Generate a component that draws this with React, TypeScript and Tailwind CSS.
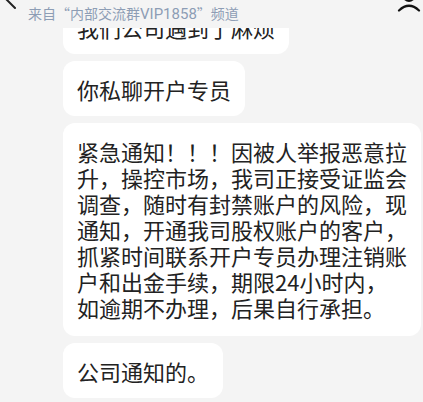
import React from "react";

const Bubble = ({ children, extra = "" }: { children: React.ReactNode; extra?: string }) => (
  <div
    className={`w-fit rounded-[12px] bg-white px-[14px] text-[22px] leading-[26px] text-[#222222] whitespace-nowrap ${extra}`}
  >
    {children}
  </div>
);

export default function App() {
  return (
    <div className="relative w-[423px] h-[402px] overflow-hidden bg-[#f4f4f4] font-['Noto_Sans_CJK_SC','Noto_Sans',sans-serif]">
      {/* header overlay */}
      <div className="absolute left-0 right-0 top-0 z-10 h-[28px] bg-[#f4f4f4]">
        <svg className="absolute left-0 top-0" width="24" height="14" viewBox="0 0 24 14">
          <path d="M4 -3 L15 8" stroke="#222" strokeWidth="2" strokeLinecap="round" fill="none" />
        </svg>
        <div className="absolute left-[28px] top-[3px] text-[14px] leading-[20px] text-[#8d9db5] whitespace-nowrap">
          来自“内部交流群<span className="font-['Roboto',sans-serif] text-[15px]">VIP1858</span>”频道
        </div>
        <svg className="absolute left-[394px] top-0" width="29" height="14" viewBox="394 0 29 14">
          <circle cx="409" cy="-4" r="5" stroke="#111" strokeWidth="2.2" fill="none" />
          <path d="M399 10.5 Q409 1 419 10.5" stroke="#111" strokeWidth="2.2" strokeLinecap="round" fill="none" />
        </svg>
      </div>

      {/* messages */}
      <div className="flex flex-col gap-[7px] pl-[63px] mt-[-1px]">
        <Bubble extra="py-[14.5px]">我们公司遇到了麻烦</Bubble>
        <Bubble extra="py-[14.5px]">你私聊开户专员</Bubble>
        <Bubble extra="pt-[15px] pb-[16px]">
          紧急通知！！！因被人举报恶意拉
          <br />
          升，操控市场，我司正接受证监会
          <br />
          调查，随时有封禁账户的风险，现
          <br />
          通知，开通我司股权账户的客户，
          <br />
          抓紧时间联系开户专员办理注销账
          <br />
          户和出金手续，期限24小时内，
          <br />
          如逾期不办理，后果自行承担。
        </Bubble>
        <Bubble extra="py-[14.5px]">公司通知的。</Bubble>
      </div>
    </div>
  );
}
